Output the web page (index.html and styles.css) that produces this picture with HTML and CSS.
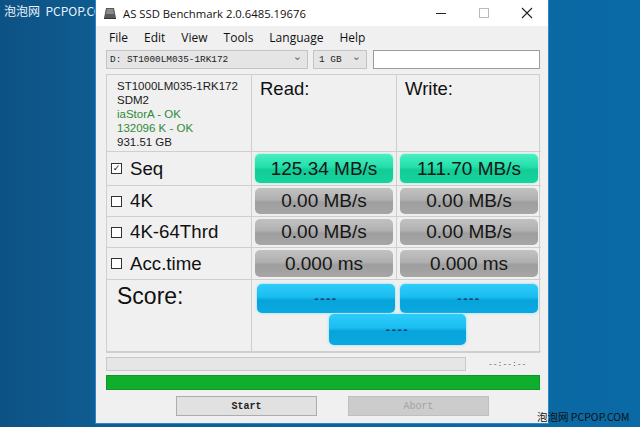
FILE: index.html
```html
<!DOCTYPE html>
<html lang="en">

<head>
    <meta charset="UTF-8">
    <title>AS SSD Benchmark</title>
    <link rel="stylesheet" href="styles.css">
</head>

<body>
    <div class="desktop">
        <div class="watermark top">泡泡网&nbsp; PCPOP.COM</div>

        <div class="window">
            <div class="titlebar">
                <svg class="app-icon" width="14" height="14" viewBox="0 0 14 14">
                    <path d="M3 2 L11 2 L13 12 L1 12 Z" fill="#5a5a5a"/>
                    <path d="M1 12 L13 12 L13 13 L1 13 Z" fill="#333"/>
                    <path d="M4 3 L10 3 L11 8 L3 8 Z" fill="#8a8a8a"/>
                </svg>
                <span class="title">AS SSD Benchmark 2.0.6485.19676</span>
                <div class="caption-buttons">
                    <span class="cap min">
                        <svg width="12" height="12" viewBox="0 0 12 12"><path d="M1 6.5 H11" stroke="#222" stroke-width="1"/></svg>
                    </span>
                    <span class="cap max">
                        <svg width="12" height="12" viewBox="0 0 12 12"><rect x="1.5" y="1.5" width="9" height="9" fill="none" stroke="#bbb"/></svg>
                    </span>
                    <span class="cap close">
                        <svg width="12" height="12" viewBox="0 0 12 12"><path d="M1 1 L11 11 M11 1 L1 11" stroke="#222" stroke-width="1.1"/></svg>
                    </span>
                </div>
            </div>

            <div class="client">
                <div class="menu">
                    <span>File</span>
                    <span>Edit</span>
                    <span>View</span>
                    <span>Tools</span>
                    <span>Language</span>
                    <span>Help</span>
                </div>

                <div class="toolbar">
                    <div class="select drive">D: ST1000LM035-1RK172<span class="arrow">&#8964;</span></div>
                    <div class="select size">1 GB<span class="arrow">&#8964;</span></div>
                    <div class="textbox"></div>
                </div>

                <div class="results">
                    <div class="cell info">
                        <div>ST1000LM035-1RK172</div>
                        <div>SDM2</div>
                        <div class="ok">iaStorA - OK</div>
                        <div class="ok">132096 K - OK</div>
                        <div>931.51 GB</div>
                    </div>
                    <div class="cell head">Read:</div>
                    <div class="cell head">Write:</div>

                    <div class="cell label"><span class="check on">&#10003;</span>Seq</div>
                    <div class="cell"><div class="val green">125.34 MB/s</div></div>
                    <div class="cell"><div class="val green">111.70 MB/s</div></div>

                    <div class="cell label"><span class="check"></span>4K</div>
                    <div class="cell"><div class="val gray">0.00 MB/s</div></div>
                    <div class="cell"><div class="val gray">0.00 MB/s</div></div>

                    <div class="cell label"><span class="check"></span>4K-64Thrd</div>
                    <div class="cell"><div class="val gray">0.00 MB/s</div></div>
                    <div class="cell"><div class="val gray">0.00 MB/s</div></div>

                    <div class="cell label"><span class="check"></span>Acc.time</div>
                    <div class="cell"><div class="val gray">0.000 ms</div></div>
                    <div class="cell"><div class="val gray">0.000 ms</div></div>

                    <div class="cell score-label">Score:</div>
                    <div class="cell score">
                        <div class="score-row">
                            <div class="val blue">----</div>
                            <div class="val blue">----</div>
                        </div>
                        <div class="val blue total">----</div>
                    </div>
                </div>

                <div class="progress-row">
                    <div class="progress"></div>
                    <span class="time">--:--:--</span>
                </div>
                <div class="done-bar"></div>

                <div class="actions">
                    <button class="btn start">Start</button>
                    <button class="btn abort">Abort</button>
                </div>
            </div>
        </div>

        <div class="watermark bottom">泡泡网 PCPOP.COM</div>
    </div>
</body>

</html>
```

FILE: styles.css
```css
* {
    margin: 0;
    padding: 0;
    box-sizing: border-box;
}

body {
    width: 640px;
    height: 427px;
    overflow: hidden;
    font-family: "Liberation Sans", Arial, sans-serif;
}

.desktop {
    position: relative;
    width: 640px;
    height: 427px;
    background: linear-gradient(90deg, #0d5285 0%, #0f5c90 15%, #0b67a0 70%, #0a6aa6 100%);
}

.watermark {
    position: absolute;
    font-family: "Noto Sans CJK SC", "Liberation Sans", sans-serif;
    font-size: 12px;
    white-space: nowrap;
}

.watermark.top {
    left: 4px;
    top: 2px;
    color: #e8f2fa;
}

.watermark.bottom {
    left: 537px;
    top: 409px;
    font-size: 10.5px;
    color: #111;
}

/* window */
.window {
    position: absolute;
    left: 95px;
    top: 0;
    width: 454px;
    height: 424px;
    border: 1px solid #2b86cf;
    border-top: none;
    background-color: #f0f0f0;
    display: flex;
    flex-direction: column;
}

.titlebar {
    height: 26px;
    background-color: #fff;
    display: flex;
    align-items: center;
    padding-left: 7px;
}

.app-icon {
    margin-right: 6px;
}

.title {
    font-family: "Open Sans", "Noto Sans", sans-serif;
    font-size: 11.3px;
    color: #111;
}

.caption-buttons {
    margin-left: auto;
    display: flex;
}

.cap {
    width: 43px;
    height: 26px;
    display: flex;
    align-items: center;
    justify-content: center;
}

.client {
    padding: 0 8px 0 10px;
    display: flex;
    flex-direction: column;
}

.menu {
    height: 22px;
    display: flex;
    align-items: center;
    padding-left: 3px;
    font-family: "Open Sans", "Noto Sans", sans-serif;
    font-size: 12px;
    color: #111;
}

.menu span {
    margin-right: 16px;
}

.toolbar {
    display: flex;
    height: 19px;
    margin-top: 2px;
}

.select {
    position: relative;
    height: 19px;
    background-color: #e5e5e5;
    border: 1px solid #c4c4c4;
    font-family: "Liberation Mono", monospace;
    font-size: 9.4px;
    color: #222;
    line-height: 17px;
    padding-left: 3px;
}

.select.drive {
    width: 202px;
}

.select.size {
    width: 54px;
    margin-left: 5px;
    padding-left: 5px;
}

.arrow {
    position: absolute;
    right: 5px;
    top: -3px;
    font-size: 11px;
    color: #666;
    font-family: "DejaVu Sans", sans-serif;
}

.textbox {
    width: 167px;
    margin-left: 6px;
    height: 19px;
    background-color: #fff;
    border: 1px solid #9c9c9c;
}

/* result table */
.results {
    margin-top: 5px;
    display: grid;
    grid-template-columns: 145px 145px 144px;
    grid-template-rows: 77px 34px 31px 31px 32px 72px;
    border: 1px solid #cfcfcf;
}

.cell {
    border-right: 1px solid #cfcfcf;
    border-bottom: 1px solid #cfcfcf;
    padding: 2px 3px;
}

.cell:nth-child(3n) {
    border-right: none;
}

.info {
    padding: 4px 0 0 10px;
    font-size: 11.5px;
    line-height: 14px;
    color: #1a1a1a;
}

.info .ok {
    color: #2f8a38;
}

.head {
    padding: 3px 0 0 8px;
    font-size: 18.5px;
    color: #111;
}

.label {
    display: flex;
    align-items: center;
    padding-left: 4px;
    font-size: 18.7px;
    color: #111;
}

.check {
    width: 11px;
    height: 11px;
    border: 1px solid #333;
    background-color: #fff;
    margin-right: 8px;
    font-size: 9px;
    line-height: 9px;
    text-align: center;
    font-family: "DejaVu Sans", sans-serif;
}

.val {
    height: 100%;
    border-radius: 5px;
    display: flex;
    align-items: center;
    justify-content: center;
    font-size: 19px;
    color: #161616;
}

.green {
    background: linear-gradient(#48f0c0 0%, #24deaa 45%, #12cc96 55%, #16d49c 100%);
    box-shadow: 0 0 2px #6fe8c8;
}

.gray {
    background: linear-gradient(#c2c2c2 0%, #b0b0b0 45%, #9e9e9e 55%, #a6a6a6 100%);
}

.blue {
    background: linear-gradient(#2fcdfa 0%, #19bdf0 45%, #07a4dc 55%, #0ca8e0 100%);
    box-shadow: 0 0 3px #7fdcf8;
    font-size: 13px;
    font-weight: bold;
    color: #1c3d70;
    letter-spacing: 1.5px;
}

.score-label {
    padding: 3px 0 0 10px;
    font-size: 23px;
    color: #111;
}

.score {
    grid-column: span 2;
    border-right: none;
    padding: 4px 3px 6px 5px;
    display: flex;
    flex-direction: column;
    align-items: center;
    gap: 1px;
}

.score-row {
    display: flex;
    gap: 5px;
    width: 100%;
    height: 29px;
}

.score-row .val {
    flex: 1;
}

.total {
    width: 137px;
    height: 31px;
    flex: none;
}

/* progress and buttons */
.progress-row {
    display: flex;
    align-items: center;
    margin-top: 3px;
    height: 15px;
}

.progress {
    width: 360px;
    height: 14px;
    background-color: #e6e6e6;
    border: 1px solid #c9c9c9;
}

.time {
    margin-left: 22px;
    font-family: "Liberation Mono", monospace;
    font-size: 8px;
    color: #555;
}

.done-bar {
    margin-top: 4px;
    height: 15px;
    background-color: #0fae2c;
    border: 1px solid #0b9a24;
}

.actions {
    display: flex;
    margin-top: 6px;
    padding-left: 70px;
    gap: 31px;
}

.btn {
    width: 141px;
    height: 20px;
    font-family: "Liberation Mono", monospace;
    font-size: 10px;
    font-weight: bold;
}

.start {
    background-color: #e1e1e1;
    border: 1px solid #adadad;
    color: #222;
}

.abort {
    background-color: #cccccc;
    border: 1px solid #bfbfbf;
    color: #a3a3a3;
    font-weight: normal;
}
```
